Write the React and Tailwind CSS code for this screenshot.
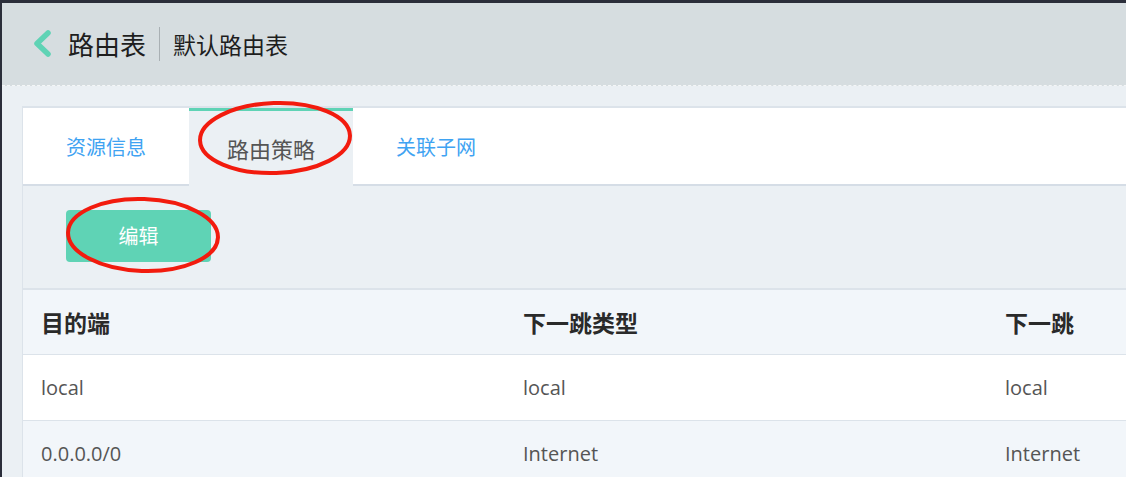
import React from "react";

const cjk = { fontFamily: '"Noto Sans CJK SC", "Open Sans", sans-serif' };
const latin = { fontFamily: '"Open Sans", "Noto Sans CJK SC", sans-serif' };

const rows = [
  ["local", "local", "local"],
  ["0.0.0.0/0", "Internet", "Internet"],
];

const Tab = ({ label, active }) =>
  active ? (
    <div className="w-[164px] flex items-center justify-center bg-[#ebf0f4] border-t-[3px] border-[#5fd3b5] text-[22px] text-[#555]">
      {label}
    </div>
  ) : (
    <div className="w-[166px] flex items-center justify-center pt-[2px] bg-white border-b-2 border-[#d5dde6] text-[20px] text-[#3fa3f2]">
      {label}
    </div>
  );

export default function App() {
  return (
    <div className="relative w-[1126px] h-[477px] overflow-hidden flex bg-[#ebf0f4]" style={cjk}>
      <div className="w-[2px] shrink-0 bg-[#2b2e3a]" />
      <div className="flex-1 flex flex-col min-h-0">
        <div className="h-[3px] shrink-0 bg-[#2b2e3a]" />
        {/* header */}
        <div className="h-[83px] shrink-0 flex items-center bg-[#d6dde0] border-b border-dashed border-[#f4f6f7] pl-[31px]">
          <svg width="19" height="27" viewBox="0 0 19 27" className="mr-[16px] mt-[-2px]">
            <path d="M15 3 L4 13.5 L15 24" fill="none" stroke="#5fd3b5" strokeWidth="5.5" strokeLinecap="round" strokeLinejoin="round" />
          </svg>
          <span className="text-[26px] text-[#1e1e1e] leading-none">路由表</span>
          <div className="w-px h-[34px] bg-[#a9b0b4] mx-[13px]" />
          <span className="text-[23px] text-[#1e1e1e] leading-none">默认路由表</span>
        </div>
        {/* content */}
        <div className="shrink-0 pt-[20px] pl-[20px]">
          <div className="w-[1200px] border-t-2 border-l border-[#dce3ea]">
            <div className="h-[78px] flex">
              <Tab label="资源信息" />
              <Tab label="路由策略" active />
              <Tab label="关联子网" />
              <div className="flex-1 bg-white border-b-2 border-[#d5dde6]" />
            </div>
            <div className="h-[102px] pt-[24px] pl-[43px]">
              <button className="w-[145px] h-[52px] rounded-[4px] bg-[#5fd3b5] text-white text-[20px]" style={cjk}>
                编辑
              </button>
            </div>
            <div className="border-t-2 border-[#dce3ea]">
              <div className="h-[65px] flex items-center bg-[#f2f6fa] border-b border-[#dce3ea] font-bold text-[23px] text-[#2a2a2a]">
                <div className="w-[482px] pl-[18px]">目的端</div>
                <div className="w-[482px] pl-[18px]">下一跳类型</div>
                <div className="flex-1 pl-[18px]">下一跳</div>
              </div>
              {rows.map((r, i) => (
                <div
                  key={i}
                  className={`h-[66px] flex items-center border-b border-[#dce3ea] text-[20px] text-[#555] ${i % 2 === 0 ? "bg-white" : "bg-[#f2f6fa]"}`}
                  style={latin}
                >
                  <div className="w-[482px] pl-[18px]">{r[0]}</div>
                  <div className="w-[482px] pl-[18px]">{r[1]}</div>
                  <div className="flex-1 pl-[18px]">{r[2]}</div>
                </div>
              ))}
            </div>
          </div>
        </div>
      </div>
      {/* annotation circles */}
      <svg className="absolute left-0 top-0 pointer-events-none" width="1126" height="477">
        <ellipse cx="275" cy="138" rx="75" ry="35" fill="none" stroke="#f21b0e" strokeWidth="4" transform="rotate(-2 275 138)" />
        <ellipse cx="143" cy="235" rx="75" ry="36" fill="none" stroke="#f21b0e" strokeWidth="4" transform="rotate(2 143 235)" />
      </svg>
    </div>
  );
}
